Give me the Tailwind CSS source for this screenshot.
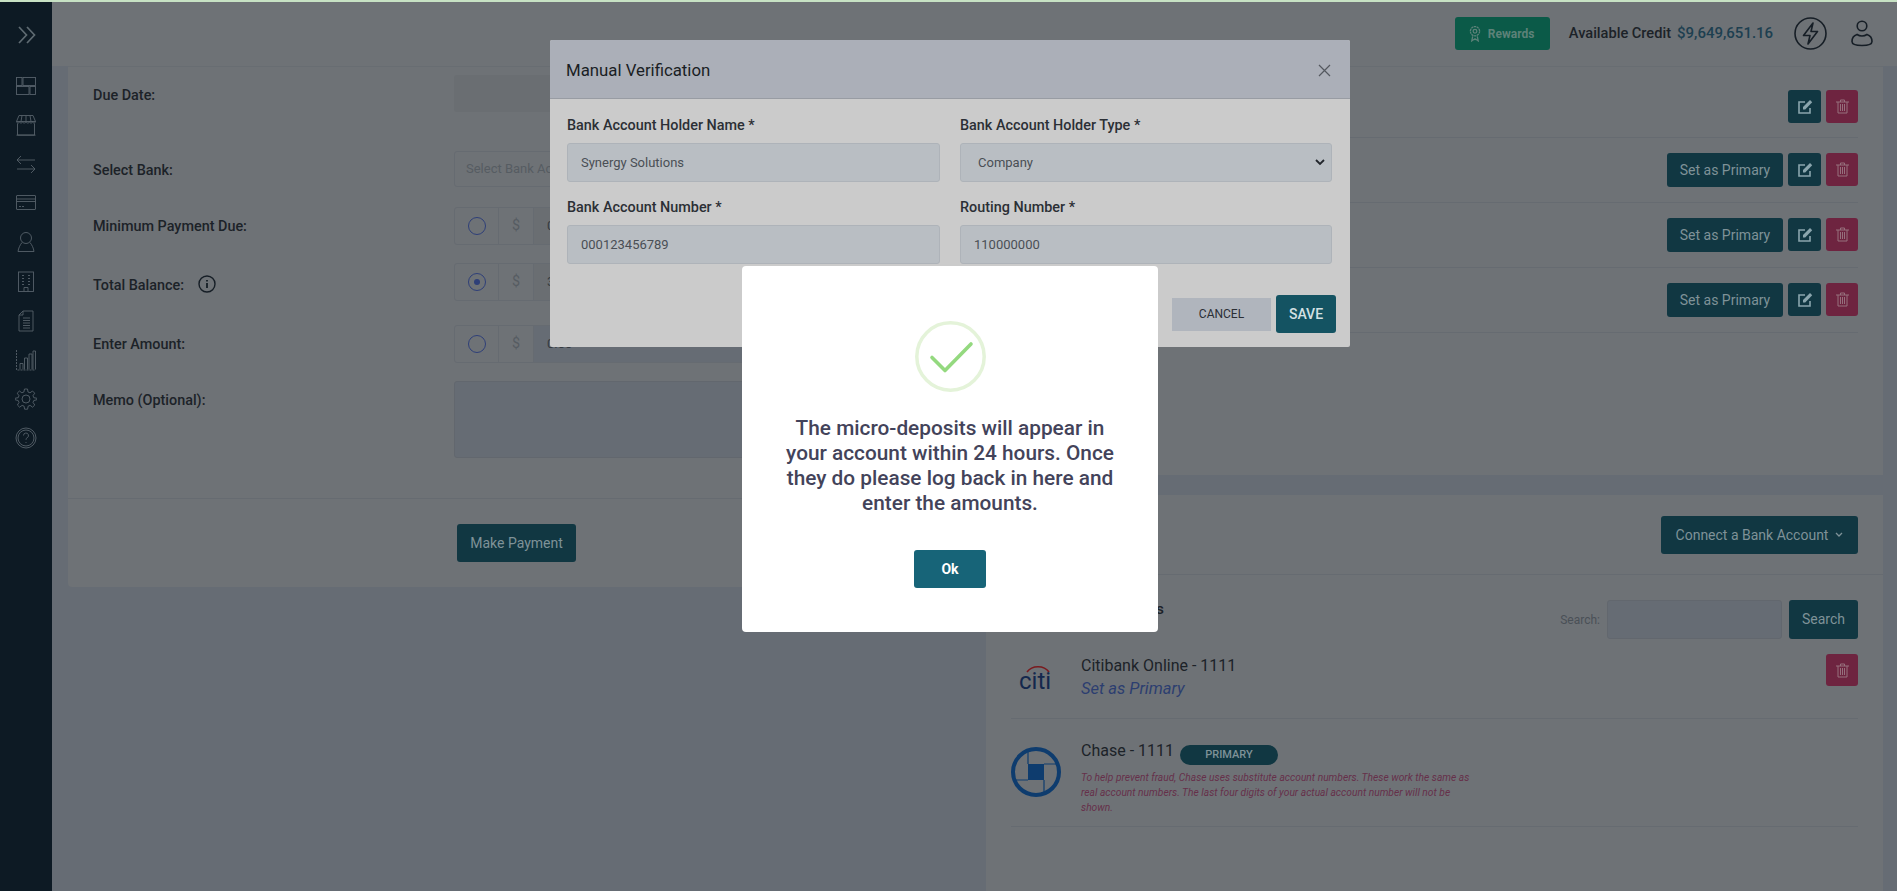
<!DOCTYPE html>
<html lang="en">

<head>
  <meta charset="UTF-8">
  <title>Make Payment</title>
  <script src="https://cdn.jsdelivr.net/npm/@tailwindcss/browser@4"></script>
</head>

<body class="relative w-[1897px] h-[891px] overflow-hidden bg-[#666c74] font-[Roboto,sans-serif] text-[14px] text-[#1c2228]">
  <div class="h-[2px] bg-[#c7e2c4]"></div>

  <div class="flex h-[889px]">
    <!-- sidebar -->
    <aside class="w-[52px] shrink-0 bg-[#0d1a24] flex flex-col items-center text-[#56616a]">
      <div class="h-[64px] flex items-center justify-center pt-[2px] pl-[2px] text-[#5f6b72]">
        <svg class="w-[20px] h-[18px]" viewBox="0 0 20 18" fill="none" stroke="currentColor" stroke-width="1.7">
          <path d="M2 1l7.500 8L2 17" />
          <path d="M10 1l7.500 8L10 17" />
        </svg>
      </div>
      <div class="w-full flex flex-col items-center">
        <div class="h-[39.2px] flex items-center">
          <svg class="w-[22px] h-[22px]" viewBox="0 0 22 22" fill="none" stroke="currentColor" stroke-width=".9">
            <rect x="1.500" y="2.500" width="5.500" height="8" />
            <rect x="8" y="2.500" width="12.500" height="8" />
            <rect x="1.500" y="11.500" width="12.500" height="8" />
            <rect x="15" y="11.500" width="5.500" height="8" />
          </svg>
        </div>
        <div class="h-[39.2px] flex items-center">
          <svg class="w-[22px] h-[22px]" viewBox="0 0 22 22" fill="none" stroke="currentColor" stroke-width=".9">
            <path d="M4 1.500h14l2.500 6H1.500z" />
            <path d="M1.500 7.500c0 2 3 2 3 0 0 2 3 2 3 0 0 2 3.500 2 3.500 0 0 2 3.500 2 3.500 0 0 2 3 2 3 0 0 2 3 2 3 0" />
            <path d="M7 1.500l-1 6M11 1.500v6M15 1.500l1 6M2.500 9.500V21h17V9.500M1.500 21.200h19" />
          </svg>
        </div>
        <div class="h-[39.2px] flex items-center">
          <svg class="w-[22px] h-[22px]" viewBox="0 0 22 22" fill="none" stroke="currentColor" stroke-width=".9">
            <path d="M20 7H2M6 3L2 7l4 4" />
            <path d="M2 16h18M16 12l4 4-4 4" />
          </svg>
        </div>
        <div class="h-[39.2px] flex items-center">
          <svg class="w-[22px] h-[22px]" viewBox="0 0 22 22" fill="none" stroke="currentColor" stroke-width=".9">
            <rect x="1.500" y="3.500" width="19" height="14" rx=".5" />
            <path d="M1.500 7h19M1.500 9.500h19M4 14.500h2M7 14.500h2" />
          </svg>
        </div>
        <div class="h-[39.2px] flex items-center">
          <svg class="w-[22px] h-[22px]" viewBox="0 0 22 22" fill="none" stroke="currentColor" stroke-width=".9">
            <circle cx="11" cy="7" r="5.500" />
            <path d="M7 11.500C5 14 3.500 17 3 20.500h16C18.500 17 17 14 15 11.500" />
          </svg>
        </div>
        <div class="h-[39.2px] flex items-center">
          <svg class="w-[22px] h-[22px]" viewBox="0 0 22 22" fill="none" stroke="currentColor" stroke-width=".9">
            <rect x="3.500" y="1" width="15" height="19.500" />
            <path d="M7 4.500h2M7 7.500h2M7 10.500h2M7 13.500h2M13 4.500h2M13 7.500h2M13 10.500h2M13 13.500h2M9 20.500v-4h4v4" />
          </svg>
        </div>
        <div class="h-[39.2px] flex items-center">
          <svg class="w-[22px] h-[22px]" viewBox="0 0 22 22" fill="none" stroke="currentColor" stroke-width=".9">
            <path d="M8 1h10v20H4V5z" />
            <path d="M8 1v4H4M8 8h7M8 10.500h7M8 13h7M8 15.500h7M8 18h7" />
          </svg>
        </div>
        <div class="h-[39.2px] flex items-center">
          <svg class="w-[22px] h-[22px]" viewBox="0 0 22 22" fill="none" stroke="currentColor" stroke-width=".9">
            <path d="M1.500 1v20h19" stroke-dasharray="2 1" />
            <path d="M5 20.500v-6h3v6M9.500 20.500V9h3v11.500M14 20.500V5h3v15.500M18 20.500V2h2.500v18.500" />
          </svg>
        </div>
        <div class="h-[39.2px] flex items-center">
          <svg class="w-[22px] h-[22px]" viewBox="0 0 22 22" fill="none" stroke="currentColor" stroke-width=".9">
            <circle cx="11" cy="11" r="4" />
            <path d="M9.500 1h3l.5 3 2 .8 2.500-1.800 2.200 2.200L18 7.700l.8 2 3 .5v1.600l-3 .7-.8 2 1.800 2.500-2.200 2.200-2.500-1.800-2 .8-.5 3h-3l-.5-3-2-.8-2.500 1.800-2.200-2.200L4 14.500l-.8-2-3-.7v-1.600l3-.5.8-2-1.800-2.500 2.200-2.200 2.500 1.800 2-.8z" />
          </svg>
        </div>
        <div class="h-[39.2px] flex items-center">
          <svg class="w-[22px] h-[22px]" viewBox="0 0 22 22" fill="none" stroke="currentColor" stroke-width=".9">
            <circle cx="11" cy="11" r="10" />
            <circle cx="11" cy="11" r="8" />
            <path d="M8.500 8.500a2.500 2.500 0 1 1 3.500 2.300c-.7.400-1 .9-1 2M11 15v1" />
          </svg>
        </div>
      </div>
    </aside>

    <div class="flex-1 flex flex-col min-w-0">
      <!-- header -->
      <header class="h-[64px] shrink-0 bg-[#6e7276] flex items-center justify-end pr-[24px] pb-[1px]">
        <div class="h-[33px] w-[95px] rounded-[3px] bg-[#0b5a48] flex items-center pl-[14px] gap-[7px] text-[12px] font-bold text-[#5d8279]">
          <svg class="w-[12px] h-[17px]" viewBox="0 0 13 18" fill="none" stroke="currentColor" stroke-width="1.400">
            <circle cx="6.500" cy="6.500" r="5" stroke-dasharray="2.500 .6" />
            <circle cx="6.500" cy="6.500" r="2" />
            <path d="M4 12l-1 5 3-2 .5.500.5-.500 3 2-1-5" />
          </svg>
          <span>Rewards</span>
        </div>
        <div class="ml-[19px] text-[14.6px] font-medium whitespace-nowrap">Available Credit</div>
        <div class="ml-[6px] w-[96px] text-[15px] font-medium whitespace-nowrap text-[#1d3f50]">$9,649,651.16</div>
        <svg class="ml-[21px] w-[33px] h-[33px]" viewBox="0 0 33 33" fill="none" stroke="#161e26" stroke-width="1.600">
          <circle cx="16.500" cy="16.500" r="15.500" />
          <path d="M19 6L9.500 18.500h6.500L14 27l9.500-12.500H17z" stroke-linejoin="round" />
        </svg>
        <svg class="ml-[24px] w-[22px] h-[27px]" viewBox="0 0 22 27" fill="none" stroke="#161e26" stroke-width="1.600">
          <circle cx="11" cy="6" r="4.800" />
          <path d="M6 14.500c-3 1-5 4-5 7 0 3 3 4 10 4s10-1 10-4c0-3-2-6-5-7-1.500 1-3 1.500-5 1.500s-3.500-.5-5-1.500z" />
        </svg>
      </header>

      <!-- content -->
      <div class="flex-1 flex gap-[10px] pl-[16px] pr-[14px] min-h-0">
        <!-- payment form -->
        <section class="w-[908px] h-[521px] shrink-0 bg-[#6e7276] border-t border-[#686d72] rounded-b-[4px]">
          <div class="pl-[25px] pr-[26px] pt-[8px] text-[14.4px]">
            <div class="flex items-center h-[37px]">
              <label class="w-[361px] font-medium pt-[5px]">Due Date:</label>
              <div class="flex-1 h-full rounded-[3px] bg-[#6a6e72]"></div>
            </div>
            <div class="flex items-center h-[36px] mt-[39px]">
              <label class="w-[361px] font-medium pt-[4px]">Select Bank:</label>
              <div class="flex-1 h-full rounded-[3px] border border-[#666b71] pl-[11px] flex items-center text-[13px] text-[#565c62]">Select Bank Account</div>
            </div>
            <div class="flex items-center h-[38px] mt-[20px]">
              <label class="w-[361px] font-medium pt-[2px]">Minimum Payment Due:</label>
              <div class="flex-1 h-full flex rounded-[3px] border border-[#666b71]">
                <div class="w-[44px] flex items-center justify-center border-r border-[#666b71]">
                  <span class="w-[18px] h-[18px] rounded-full border border-[#2e3f78]"></span>
                </div>
                <div class="w-[35px] flex items-center justify-center border-r border-[#666b71] text-[#565c62]">$</div>
                <div class="flex-1 pl-[13px] flex items-center bg-[#6a6e72] text-[#343a40] text-[13px]">0.00</div>
              </div>
            </div>
            <div class="flex items-center h-[38px] mt-[18px]">
              <label class="w-[361px] font-medium flex items-center pt-[8px]">Total Balance:
                <svg class="ml-[14px] w-[18px] h-[18px] -translate-y-[2px]" viewBox="0 0 18 18" fill="none" stroke="#161e26">
                  <circle cx="9" cy="9" r="8" stroke-width="1.400" />
                  <path d="M9 8v5M9 5v1.500" stroke-width="1.800" />
                </svg>
              </label>
              <div class="flex-1 h-full flex rounded-[3px] border border-[#666b71]">
                <div class="w-[44px] flex items-center justify-center border-r border-[#666b71]">
                  <span class="w-[18px] h-[18px] rounded-full border border-[#2e3f78] flex items-center justify-center">
                    <span class="w-[6px] h-[6px] rounded-full bg-[#2e3f78]"></span>
                  </span>
                </div>
                <div class="w-[35px] flex items-center justify-center border-r border-[#666b71] text-[#565c62]">$</div>
                <div class="flex-1 pl-[13px] flex items-center bg-[#6a6e72] text-[#343a40] text-[13px]">3,250.00</div>
              </div>
            </div>
            <div class="flex items-center h-[38px] mt-[24px]">
              <label class="w-[361px] font-medium pt-[2px]">Enter Amount:</label>
              <div class="flex-1 h-full flex rounded-[3px] border border-[#666b71]">
                <div class="w-[44px] flex items-center justify-center border-r border-[#666b71]">
                  <span class="w-[18px] h-[18px] rounded-full border border-[#2e3f78]"></span>
                </div>
                <div class="w-[35px] flex items-center justify-center border-r border-[#666b71] text-[#565c62]">$</div>
                <div class="flex-1 pl-[13px] flex items-center bg-[#666c74] text-[#343a40] text-[13px]">0.00</div>
              </div>
            </div>
            <div class="flex h-[77px] mt-[18px]">
              <label class="w-[361px] font-medium pt-[9px]">Memo (Optional):</label>
              <div class="flex-1 h-full rounded-[3px] border border-[#62676e] bg-[#666c74]"></div>
            </div>
          </div>
          <div class="mt-[40px] border-t border-[#666b71] pt-[25px] pl-[389px]">
            <button class="h-[38px] w-[119px] rounded-[3px] bg-[#113742] text-[#7f9298]">Make Payment</button>
          </div>
        </section>

        <div class="flex-1 flex flex-col gap-[20px] min-w-0">
          <!-- bank accounts -->
          <section class="h-[409px] shrink-0 bg-[#6e7276] border-t border-[#686d72] px-[25px]">
            <div class="h-[71px] pt-[23px] flex justify-end gap-[5px] border-b border-[#666b71]">
              <button class="w-[33px] h-[33px] rounded-[3px] bg-[#113742] flex items-center justify-center">
                <svg class="w-[16px] h-[16px]" viewBox="0 0 16 16" fill="none" stroke="#8aa5ad" stroke-width="1.600">
                  <path d="M13 9v5H2V3h6" />
                  <path d="M6 10.500V8l7-7 2.200 2.200-7 7.300z" fill="#8aa5ad" stroke="none" />
                </svg>
              </button>
              <button class="w-[32px] h-[33px] rounded-[3px] bg-[#6e2440] flex items-center justify-center">
                <svg class="w-[13px] h-[15px]" viewBox="0 0 13 15" fill="none" stroke="#96707d">
                  <path d="M0 3h13M4.500 3V1h4v2M2 3v11h9V3M4.500 5v7M6.500 5v7M8.500 5v7" />
                </svg>
              </button>
            </div>
            <div class="h-[65px] pt-[15px] flex justify-end gap-[5px] border-b border-[#666b71]">
              <button class="w-[116px] h-[34px] rounded-[3px] bg-[#113742] text-[#7f9298]">Set as Primary</button>
              <button class="w-[33px] h-[33px] rounded-[3px] bg-[#113742] flex items-center justify-center">
                <svg class="w-[16px] h-[16px]" viewBox="0 0 16 16" fill="none" stroke="#8aa5ad" stroke-width="1.600">
                  <path d="M13 9v5H2V3h6" />
                  <path d="M6 10.500V8l7-7 2.200 2.200-7 7.300z" fill="#8aa5ad" stroke="none" />
                </svg>
              </button>
              <button class="w-[32px] h-[33px] rounded-[3px] bg-[#6e2440] flex items-center justify-center">
                <svg class="w-[13px] h-[15px]" viewBox="0 0 13 15" fill="none" stroke="#96707d">
                  <path d="M0 3h13M4.500 3V1h4v2M2 3v11h9V3M4.500 5v7M6.500 5v7M8.500 5v7" />
                </svg>
              </button>
            </div>
            <div class="h-[65px] pt-[15px] flex justify-end gap-[5px] border-b border-[#666b71]">
              <button class="w-[116px] h-[34px] rounded-[3px] bg-[#113742] text-[#7f9298]">Set as Primary</button>
              <button class="w-[33px] h-[33px] rounded-[3px] bg-[#113742] flex items-center justify-center">
                <svg class="w-[16px] h-[16px]" viewBox="0 0 16 16" fill="none" stroke="#8aa5ad" stroke-width="1.600">
                  <path d="M13 9v5H2V3h6" />
                  <path d="M6 10.500V8l7-7 2.200 2.200-7 7.300z" fill="#8aa5ad" stroke="none" />
                </svg>
              </button>
              <button class="w-[32px] h-[33px] rounded-[3px] bg-[#6e2440] flex items-center justify-center">
                <svg class="w-[13px] h-[15px]" viewBox="0 0 13 15" fill="none" stroke="#96707d">
                  <path d="M0 3h13M4.500 3V1h4v2M2 3v11h9V3M4.500 5v7M6.500 5v7M8.500 5v7" />
                </svg>
              </button>
            </div>
            <div class="h-[65px] pt-[15px] flex justify-end gap-[5px] border-b border-[#666b71]">
              <button class="w-[116px] h-[34px] rounded-[3px] bg-[#113742] text-[#7f9298]">Set as Primary</button>
              <button class="w-[33px] h-[33px] rounded-[3px] bg-[#113742] flex items-center justify-center">
                <svg class="w-[16px] h-[16px]" viewBox="0 0 16 16" fill="none" stroke="#8aa5ad" stroke-width="1.600">
                  <path d="M13 9v5H2V3h6" />
                  <path d="M6 10.500V8l7-7 2.200 2.200-7 7.300z" fill="#8aa5ad" stroke="none" />
                </svg>
              </button>
              <button class="w-[32px] h-[33px] rounded-[3px] bg-[#6e2440] flex items-center justify-center">
                <svg class="w-[13px] h-[15px]" viewBox="0 0 13 15" fill="none" stroke="#96707d">
                  <path d="M0 3h13M4.500 3V1h4v2M2 3v11h9V3M4.500 5v7M6.500 5v7M8.500 5v7" />
                </svg>
              </button>
            </div>
          </section>

          <!-- connected accounts -->
          <section class="flex-1 bg-[#6e7276]">
            <div class="h-[80px] pt-[21px] pr-[25px] flex justify-end border-b border-[#666b71]">
              <button class="w-[197px] h-[38px] rounded-[3px] bg-[#113742] text-[#7f9298] flex items-center justify-center gap-[7px]">
                Connect a Bank Account
                <svg class="w-[8px] h-[6px]" viewBox="0 0 8 6" fill="none" stroke="#7f9298" stroke-width="1.300">
                  <path d="M1 1l3 3 3-3" />
                </svg>
              </button>
            </div>
            <div class="px-[25px]">
              <div class="flex items-center justify-between pt-[25px]">
                <h2 class="text-[15.4px] font-medium -translate-y-[10px]">Linked Bank Accounts</h2>
                <div class="flex items-center">
                  <span class="text-[12px] text-[#4a5056] mr-[7px]">Search:</span>
                  <div class="w-[175px] h-[39px] rounded-[3px] bg-[#666c74] border border-[#62676e]"></div>
                  <button class="ml-[7px] w-[69px] h-[39px] rounded-[3px] bg-[#113742] text-[#7f9298]">Search</button>
                </div>
              </div>
              <div class="h-[80px] flex border-b border-[#666b71]">
                <div class="w-[70px] pt-[25px] pl-[6px]">
                  <svg class="w-[38px] h-[28px]" viewBox="0 0 38 28">
                    <path d="M10 8C15 1 27 1 32 8" fill="none" stroke="#7a1a1e" stroke-width="1.600" />
                    <text x="2" y="25" font-family="Roboto, sans-serif" font-size="24" fill="#14284d">citi</text>
                  </svg>
                </div>
                <div class="flex-1 pt-[15px]">
                  <div class="text-[16px] leading-[24px]">Citibank Online - 1111</div>
                  <div class="text-[16.500px] leading-[22px] italic text-[#2c3e70]">Set as Primary</div>
                </div>
                <button class="w-[32px] h-[32px] mt-[15px] rounded-[3px] bg-[#6e2440] flex items-center justify-center">
                  <svg class="w-[13px] h-[15px]" viewBox="0 0 13 15" fill="none" stroke="#96707d">
                    <path d="M0 3h13M4.500 3V1h4v2M2 3v11h9V3M4.500 5v7M6.500 5v7M8.500 5v7" />
                  </svg>
                </button>
              </div>
              <div class="h-[108px] flex border-b border-[#666b71]">
                <div class="w-[70px] pt-[28px]">
                  <svg class="w-[50px] h-[50px]" viewBox="0 0 50 50" fill="none" stroke="#0e3c6e">
                    <circle cx="25" cy="25" r="23" stroke-width="4" />
                    <rect x="17" y="17" width="16" height="16" fill="#0e3c6e" stroke="none" />
                    <path d="M17 17V5M33 17h12M33 33v12M17 33H5" stroke-width="1.200" />
                  </svg>
                </div>
                <div class="w-[400px] pt-[20px]">
                  <div class="flex items-start h-[24px]">
                    <span class="text-[16px] leading-[24px]">Chase - 1111</span>
                    <span class="ml-[6px] mt-[6px] w-[98px] h-[20px] rounded-full bg-[#113742] text-[#7f9298] text-[11px] font-medium flex items-center justify-center">PRIMARY</span>
                  </div>
                  <p class="text-[10.250px] leading-[15px] italic text-[#66304a] mt-[7px]">To help prevent fraud, Chase uses substitute account numbers. These work the same as real account numbers. The last four digits of your actual account number will not be shown.</p>
                </div>
              </div>
            </div>
          </section>
        </div>
      </div>
    </div>
  </div>

  <!-- manual verification modal -->
  <div class="absolute left-[550px] top-[40px] w-[800px] h-[307px] rounded-[2px] bg-[#cbcbcb] overflow-hidden">
    <div class="h-[59px] bg-[#abafb8] border-b border-[#989ca3] flex items-center justify-between pl-[16px] pr-[19px] pt-[3px]">
      <h3 class="text-[16.800px] text-[#1a1e24]">Manual Verification</h3>
      <svg class="w-[13px] h-[13px]" viewBox="0 0 13 13" stroke="#54585f" stroke-width="1.200">
        <path d="M1 1l11 11M12 1L1 12" />
      </svg>
    </div>
    <div class="grid grid-cols-[373px_372px] gap-x-[20px] pl-[17px] pt-[16px]">
      <div>
        <label class="block h-[20px] leading-[22px] text-[14.4px] font-medium text-[#2b2f35]">Bank Account Holder Name *</label>
        <div class="mt-[8px] h-[39px] rounded-[3px] bg-[#b9bec3] border border-[#aeb3b9] pl-[13px] flex items-center text-[13px] text-[#4a4f55]">Synergy Solutions</div>
      </div>
      <div>
        <label class="block h-[20px] leading-[22px] text-[14.4px] font-medium text-[#2b2f35]">Bank Account Holder Type *</label>
        <div class="mt-[8px] h-[39px] rounded-[3px] bg-[#b9bec3] border border-[#aeb3b9] pl-[17px] pr-[6px] flex items-center justify-between text-[13px] text-[#4a4f55]">
          <span>Company</span>
          <svg class="w-[10px] h-[7px]" viewBox="0 0 10 7" fill="none" stroke="#23272c" stroke-width="1.800">
            <path d="M1 1l4 4 4-4" />
          </svg>
        </div>
      </div>
      <div class="mt-[15px]">
        <label class="block h-[20px] leading-[22px] text-[14.4px] font-medium text-[#2b2f35]">Bank Account Number *</label>
        <div class="mt-[8px] h-[39px] rounded-[3px] bg-[#b9bec3] border border-[#aeb3b9] pl-[13px] flex items-center text-[13px] text-[#4a4f55]">000123456789</div>
      </div>
      <div class="mt-[15px]">
        <label class="block h-[20px] leading-[22px] text-[14.4px] font-medium text-[#2b2f35]">Routing Number *</label>
        <div class="mt-[8px] h-[39px] rounded-[3px] bg-[#b9bec3] border border-[#aeb3b9] pl-[13px] flex items-center text-[13px] text-[#4a4f55]">110000000</div>
      </div>
    </div>
    <div class="flex items-center justify-end gap-[5px] pr-[14px] mt-[31px]">
      <button class="w-[99px] h-[33px] bg-[#b0b5bd] text-[12px] text-[#2b2f35]">CANCEL</button>
      <button class="w-[60px] h-[38px] rounded-[3px] bg-[#145362] font-medium text-[#d3e0e3]">SAVE</button>
    </div>
  </div>

  <!-- success alert -->
  <div class="absolute left-[742px] top-[266px] w-[416px] h-[366px] rounded-[4px] bg-white flex flex-col items-center pt-[55px]">
    <svg class="w-[71px] h-[71px]" viewBox="0 0 71 71" fill="none">
      <circle cx="35.500" cy="35.500" r="33.700" stroke="#e4f3d9" stroke-width="3.500" />
      <path d="M17 36.500l13 13 26-26.500" stroke="#94d97f" stroke-width="3.600" stroke-linecap="round" stroke-linejoin="round" />
    </svg>
    <p class="w-[345px] mt-[24px] text-center text-[20.800px] leading-[25px] font-medium text-[#43435a]">The micro-deposits will appear in your account within 24 hours. Once they do please log back in here and enter the amounts.</p>
    <button class="mt-[34px] w-[72px] h-[38px] rounded-[3px] bg-[#176478] text-white font-bold">Ok</button>
  </div>
</body>

</html>
